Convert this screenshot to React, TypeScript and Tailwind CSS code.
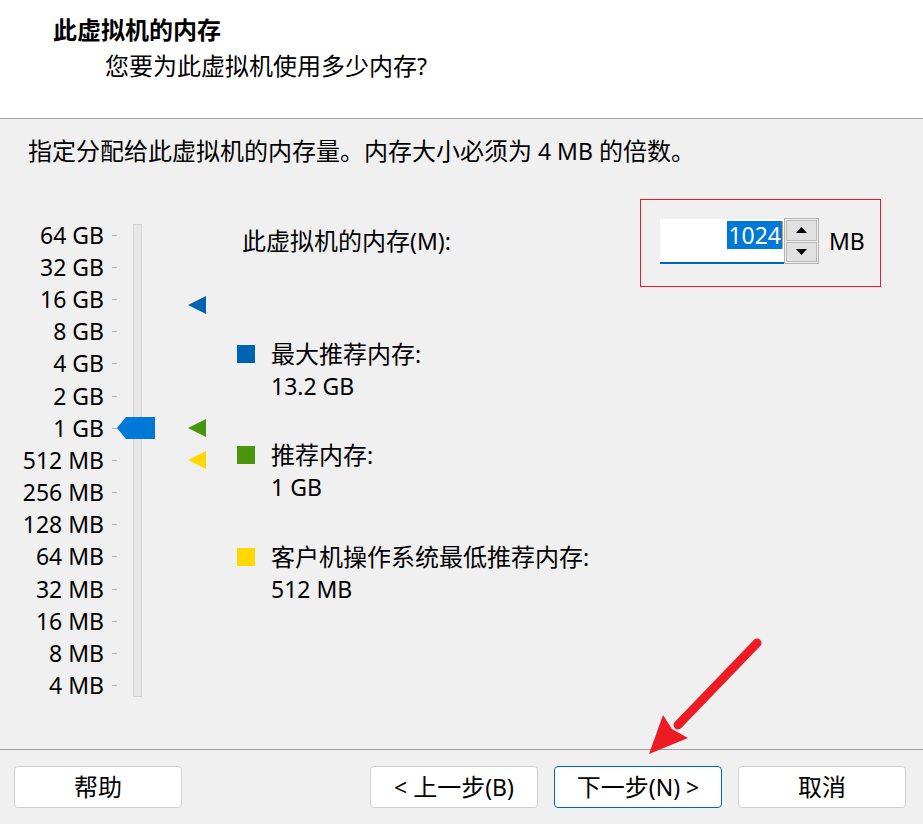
import React from "react";

const CJK = /([\u3000-\u303f\u3400-\u9fff\uff00-\uffef]+)/;

function T({ s }: { s: string }) {
  return (
    <>
      {s.split(CJK).map((p, i) =>
        i % 2 ? (
          <span key={i} className="text-[24px]">
            {p}
          </span>
        ) : (
          <React.Fragment key={i}>{p}</React.Fragment>
        )
      )}
    </>
  );
}

const labels = [
  "64 GB",
  "32 GB",
  "16 GB",
  "8 GB",
  "4 GB",
  "2 GB",
  "1 GB",
  "512 MB",
  "256 MB",
  "128 MB",
  "64 MB",
  "32 MB",
  "16 MB",
  "8 MB",
  "4 MB",
];

function Legend({ color, title, value, className }: { color: string; title: string; value: string; className: string }) {
  return (
    <div className={"flex items-start " + className}>
      <div className={"w-[18px] h-[18px] mt-[7px] " + color} />
      <div className="ml-[16px] leading-[32px]">
        <div>
          <T s={title} />
        </div>
        <div>{value}</div>
      </div>
    </div>
  );
}

function Btn({ label, primary, className }: { label: string; primary?: boolean; className?: string }) {
  return (
    <button
      className={
        "w-[168px] h-[42px] bg-white rounded-[4px] border flex items-center justify-center leading-none " +
        (primary ? "border-[#0067c0] " : "border-[#d0d0d0] ") +
        (className || "")
      }
    >
      <span className="whitespace-pre">
        <T s={label} />
      </span>
    </button>
  );
}

export default function App() {
  return (
    <div className="relative w-[923px] h-[824px] overflow-hidden bg-[#f0f0f0] text-black text-[23px] font-['Noto_Sans','Noto_Sans_CJK_SC',sans-serif]">
      <header className="h-[119px] bg-white border-b border-[#a0a0a0] pt-[14px]">
        <div className="pl-[53px] leading-[32px] font-bold">
          <T s="此虚拟机的内存" />
        </div>
        <div className="pl-[105px] mt-[4px] leading-[32px]">
          <T s="您要为此虚拟机使用多少内存?" />
        </div>
      </header>

      <div className="pl-[28px] pt-[16px] leading-[32px]">
        <T s="指定分配给此虚拟机的内存量。内存大小必须为 4 MB 的倍数。" />
      </div>

      <main className="mt-[32px] h-[550px] flex items-start">
        {/* memory scale */}
        <div className="relative mt-[20px] w-[237px] h-[483px] flex items-start shrink-0">
          <div className="flex flex-col">
            {labels.map((l) => (
              <div key={l} className="h-[32.2px] flex items-center">
                <span className="w-[104px] text-right leading-none">{l}</span>
                <span className="ml-[8px] w-[5px] h-px bg-[#b4b4b4]" />
              </div>
            ))}
          </div>
          <div className="ml-[16px] mt-[5px] w-[9px] h-[473px] bg-[#e6e6e6] border border-[#d4d4d4]" />
          {/* slider thumb */}
          <div className="absolute left-[117px] top-[198px] w-[38px] h-[22px] bg-[#0078d7] [clip-path:polygon(0_50%,9px_0,100%_0,100%_100%,9px_100%)]" />
          {/* markers */}
          <div className="absolute left-[188px] top-[77px] w-[18px] h-[18px] bg-[#0063b1] [clip-path:polygon(0_50%,100%_0,100%_100%)]" />
          <div className="absolute left-[188px] top-[200px] w-[18px] h-[18px] bg-[#4a950f] [clip-path:polygon(0_50%,100%_0,100%_100%)]" />
          <div className="absolute left-[188px] top-[232px] w-[18px] h-[18px] bg-[#ffd800] [clip-path:polygon(0_50%,100%_0,100%_100%)]" />
        </div>

        {/* right column */}
        <div className="flex-1 flex flex-col">
          <div className="flex items-center h-[88px]">
            <div className="ml-[5px] mb-[4px] leading-[32px]">
              <T s="此虚拟机的内存(M):" />
            </div>
            <div className="ml-auto mr-[42px] w-[241px] h-[88px] border border-[#ed1c24] pl-[19px] pt-[18px] flex items-start">
              <div className="mt-px w-[124px] h-[45px] bg-white border-b-2 border-[#0067c0] flex justify-end items-start pt-[2px] pr-[1px]">
                <span className="bg-[#0078d7] text-white h-[28px] leading-[28px] px-px">1024</span>
                <span className="w-px h-[28px] bg-[#e0a040]" />
              </div>
              <div className="w-[35px] h-[46px] border border-[#b4b4b4] flex flex-col p-px gap-px bg-[#f0f0f0]">
                <div className="flex-1 bg-[#e1e1e1] border border-[#b9b9b9] flex items-center justify-center">
                  <svg width="11" height="6" viewBox="0 0 11 6">
                    <polygon points="5.5,0 11,6 0,6" fill="#000" />
                  </svg>
                </div>
                <div className="flex-1 bg-[#e1e1e1] border border-[#b9b9b9] flex items-center justify-center">
                  <svg width="11" height="6" viewBox="0 0 11 6">
                    <polygon points="0,0 11,0 5.5,6" fill="#000" />
                  </svg>
                </div>
              </div>
              <div className="ml-[10px] mt-px leading-[45px]">MB</div>
            </div>
          </div>

          <Legend className="mt-[51px]" color="bg-[#0063b1]" title="最大推荐内存:" value="13.2 GB" />
          <Legend className="mt-[37px]" color="bg-[#4a950f]" title="推荐内存:" value="1 GB" />
          <Legend className="mt-[38px]" color="bg-[#ffd800]" title="客户机操作系统最低推荐内存:" value="512 MB" />
        </div>
      </main>

      <footer className="h-[75px] border-t border-[#a0a0a0] flex items-start pt-[16px] pl-[14px] pr-[17px]">
        <Btn label="帮助" />
        <Btn label="< 上一步(B)" className="ml-auto" />
        <Btn label="下一步(N) >" primary className="ml-[16px]" />
        <Btn label="取消" className="ml-[16px]" />
      </footer>

      {/* annotation arrow */}
      <svg className="absolute left-[640px] top-[630px] pointer-events-none" width="130" height="130" viewBox="0 0 130 130">
        <line x1="117" y1="13" x2="38" y2="95" stroke="#ed1c24" strokeWidth="9" strokeLinecap="round" />
        <polygon points="9,124 23,85 32,99 48,108" fill="#ed1c24" />
      </svg>
    </div>
  );
}
